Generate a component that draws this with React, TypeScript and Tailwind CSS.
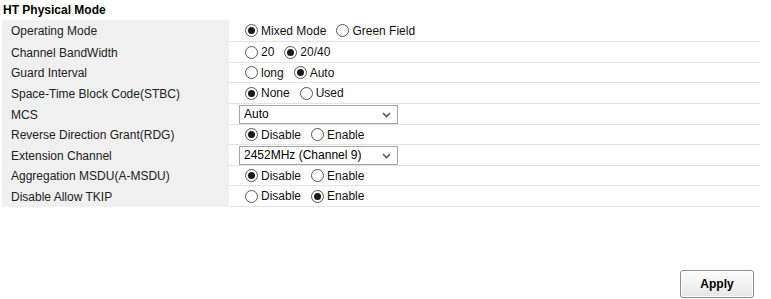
import React from "react";

type Row =
  | { label: string; h: string; kind: "radio"; options: string[]; checked: number; gaps?: string[] }
  | { label: string; h: string; kind: "select"; value: string };

const rows: Row[] = [
  { label: "Operating Mode", h: "h-[22px]", kind: "radio", options: ["Mixed Mode", "Green Field"], checked: 0 },
  { label: "Channel BandWidth", h: "h-[21px]", kind: "radio", options: ["20", "20/40"], checked: 1 },
  { label: "Guard Interval", h: "h-[20px]", kind: "radio", options: ["long", "Auto"], checked: 1 },
  { label: "Space-Time Block Code(STBC)", h: "h-[21px]", kind: "radio", options: ["None", "Used"], checked: 0 },
  { label: "MCS", h: "h-[21px]", kind: "select", value: "Auto" },
  { label: "Reverse Direction Grant(RDG)", h: "h-[20px]", kind: "radio", options: ["Disable", "Enable"], checked: 0 },
  { label: "Extension Channel", h: "h-[21px]", kind: "select", value: "2452MHz (Channel 9)" },
  { label: "Aggregation MSDU(A-MSDU)", h: "h-[20px]", kind: "radio", options: ["Disable", "Enable"], checked: 0 },
  { label: "Disable Allow TKIP", h: "h-[21px]", kind: "radio", options: ["Disable", "Enable"], checked: 1 },
];

function Radio({ on }: { on: boolean }) {
  return (
    <span className="relative inline-flex h-[13px] w-[13px] shrink-0 items-center justify-center rounded-full border border-[#555] bg-white">
      {on && <span className="h-[7px] w-[7px] rounded-full bg-[#1a1a1a]" />}
    </span>
  );
}

function Select({ value }: { value: string }) {
  return (
    <div className="ml-[10px] flex h-[19px] w-[159px] items-center justify-between border border-[#a5a5a5] bg-white pl-[4px] pr-[6px] text-[12px] text-black">
      <span>{value}</span>
      <svg width="9" height="6" viewBox="0 0 9 6" className="mt-[1px]">
        <path d="M1 1 L4.5 4.5 L8 1" fill="none" stroke="#555" strokeWidth="1.6" />
      </svg>
    </div>
  );
}

export default function App() {
  return (
    <div
      className="h-[299px] w-[771px] bg-white text-[12px] text-black"
      style={{ fontFamily: '"Liberation Sans", Arial, sans-serif' }}
    >
      <div className="pl-[3px] pt-[2px] h-[20px] font-bold leading-[16px] text-[12px]">HT Physical Mode</div>
      <div className="ml-[2px] w-[758px]">
        {rows.map((r, i) => (
          <div key={i} className={`flex ${r.h}`}>
            <div className="flex w-[227px] items-center bg-[#f0f0f0] pl-[9px] text-[#222]">{r.label}</div>
            <div className="flex flex-1 items-center border-b border-[#e3e3e3] bg-white">
              {r.kind === "radio" ? (
                <div className="ml-[16px] flex items-center">
                  {r.options.map((o, j) => (
                    <label key={j} className="mr-[10px] flex items-center gap-[3px] text-[#111]">
                      <Radio on={j === r.checked} />
                      <span>{o}</span>
                    </label>
                  ))}
                </div>
              ) : (
                <Select value={r.value} />
              )}
            </div>
          </div>
        ))}
      </div>
      <div className="flex justify-end pr-[17px] pt-[63px]">
        <button className="h-[28px] w-[74px] rounded-[3px] border border-[#8e8e8e] bg-gradient-to-b from-[#fdfdfd] to-[#e6e6e6] text-[12px] font-bold text-black shadow-[inset_0_0_0_1px_#fff]">
          Apply
        </button>
      </div>
    </div>
  );
}
